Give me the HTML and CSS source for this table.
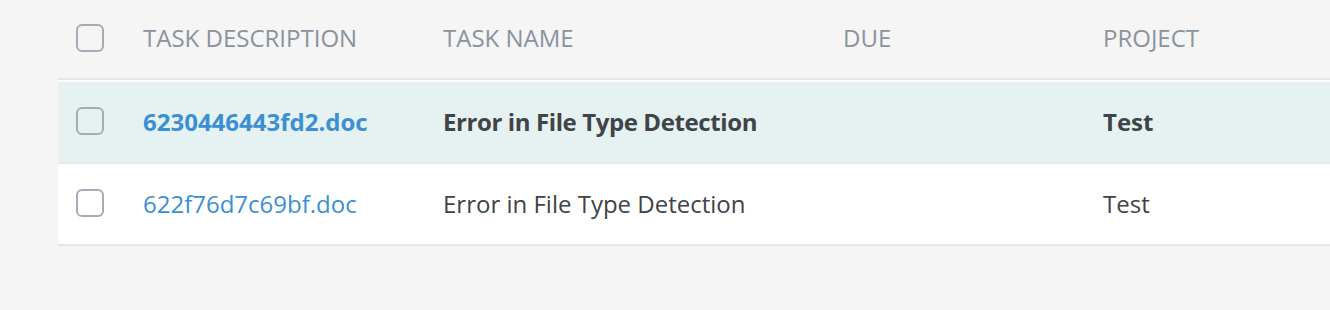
FILE: index.html
```html
<!DOCTYPE html>
<html>
<head>
<meta charset="utf-8">
<link rel="stylesheet" href="styles.css">
</head>
<body>
<div class="table">
  <div class="row head">
    <div class="cell check"><span class="box"></span></div>
    <div class="cell desc">TASK DESCRIPTION</div>
    <div class="cell name">TASK NAME</div>
    <div class="cell due">DUE</div>
    <div class="cell proj">PROJECT</div>
  </div>
  <div class="tbody">
    <div class="row item unread">
      <div class="cell check"><span class="box"></span></div>
      <div class="cell desc"><a class="link">6230446443fd2.doc</a></div>
      <div class="cell name">Error in File Type Detection</div>
      <div class="cell due"></div>
      <div class="cell proj">Test</div>
    </div>
    <div class="row item">
      <div class="cell check"><span class="box"></span></div>
      <div class="cell desc"><a class="link">622f76d7c69bf.doc</a></div>
      <div class="cell name">Error in File Type Detection</div>
      <div class="cell due"></div>
      <div class="cell proj">Test</div>
    </div>
  </div>
</div>
</body>
</html>
```
FILE: styles.css
```css
html, body {
  margin: 0;
  padding: 0;
  background: #f5f5f5;
  overflow: hidden;
}
body {
  font-family: "Open Sans", "Lato", "Liberation Sans", sans-serif;
  font-size: 24px;
  color: #404347;
  width: 1330px;
  height: 310px;
}
.table {
  margin-left: 58px;
  width: 1272px;
}
.row {
  display: flex;
  align-items: center;
}
.head {
  height: 78px;
  border-bottom: 2px solid #e3e7eb;
  color: #89939e;
}
.head .cell {
  margin-top: -4px;
}
.head .check {
  margin-top: 0;
}
.tbody {
  background: #ffffff;
  padding-top: 2px;
}
.item {
  height: 80px;
  border-bottom: 2px solid #e3e7eb;
}
.item .cell {
  margin-top: -2px;
}
.item .check {
  margin-top: 0;
}
.unread {
  background: #e6f1f2;
  font-weight: bold;
}
.unread .name {
  letter-spacing: -0.4px;
}
.cell {
  box-sizing: border-box;
  white-space: nowrap;
}
.check {
  width: 85px;
  padding-left: 18px;
  display: flex;
  align-items: center;
}
.box {
  display: block;
  width: 28px;
  height: 28px;
  box-sizing: border-box;
  border: 2px solid #a4acb7;
  border-radius: 6px;
  background: transparent;
  margin-top: -3px;
}
.desc { width: 300px; }
.name { width: 400px; }
.due { width: 260px; }
.proj { flex: 1; }
.link {
  color: #3b8fd3;
  text-decoration: none;
}
```
